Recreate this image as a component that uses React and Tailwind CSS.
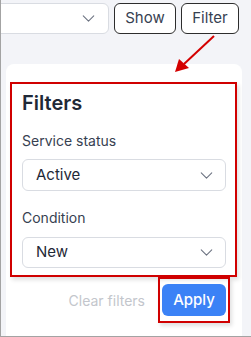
import { ChevronDown } from 'lucide-react';

function Select({ value, className = '' }) {
  return (
    <div className={`flex items-center justify-between bg-white border border-[#d9dce2] rounded-md ${className}`}>
      <span className="text-[15px] text-[#1f2937]">{value}</span>
      <ChevronDown size={21} strokeWidth={1.2} className="text-[#6b7280]" />
    </div>
  );
}

export default function App() {
  return (
    <div
      className="relative w-[251px] h-[337px] overflow-hidden bg-[#f3f4f8] border-l border-b border-[#a3a3a3] flex flex-col"
      style={{ fontFamily: 'Inter, "Noto Sans", sans-serif' }}
    >
      <div className="flex items-center gap-[5px] mt-[3px] h-[31px]">
        <Select value="" className="h-full w-[120px] -ml-[12px] pr-[9px]" />
        <button className="h-full w-[62px] border border-[#2d2d2d] rounded-md bg-white text-[15px] text-[#374151]">Show</button>
        <button className="h-full w-[58px] border border-[#2d2d2d] rounded-md bg-white text-[15px] text-[#374151]">Filter</button>
      </div>

      <div className="flex-1 mt-[30px] ml-[5px] w-[236px] bg-white rounded-t-lg pt-[18px]">
        <div className="ml-[4px] w-[227px] border-2 border-[#d00000] pt-[5px] pl-[10px] pr-[9px] pb-[7px] shadow-[2px_3px_4px_rgba(0,0,0,0.12)]">
          <h2 className="text-[20px] leading-[28px] font-semibold text-[#1f2937]">Filters</h2>
          <div className="mt-[14px] text-[14px] leading-[20px] text-[#374151]">Service status</div>
          <Select value="Active" className="mt-[8px] h-[32px] pl-[13px] pr-[8px]" />
          <div className="mt-[17px] text-[14px] leading-[20px] text-[#374151]">Condition</div>
          <Select value="New" className="mt-[9px] h-[31px] pl-[13px] pr-[8px]" />
        </div>
        <div className="flex items-center justify-end mr-[12px]">
          <span className="text-[14px] text-[#c3c6cc] mr-[13px] mt-[1px]">Clear filters</span>
          <div className="w-[72px] h-[46px] border-2 border-[#d00000] pt-[5px] pl-[2px] shadow-[2px_3px_4px_rgba(0,0,0,0.12)]">
            <button className="w-[64px] h-[32px] rounded-md bg-[#3b82f6] text-white text-[15px] font-medium">Apply</button>
          </div>
        </div>
      </div>

      <svg className="absolute left-0 top-0 pointer-events-none" width="251" height="337">
        <line x1="213" y1="36" x2="183" y2="64" stroke="#d40000" strokeWidth="2" />
        <polygon points="174,72 178,59 188,68" fill="#d40000" />
      </svg>
    </div>
  );
}
